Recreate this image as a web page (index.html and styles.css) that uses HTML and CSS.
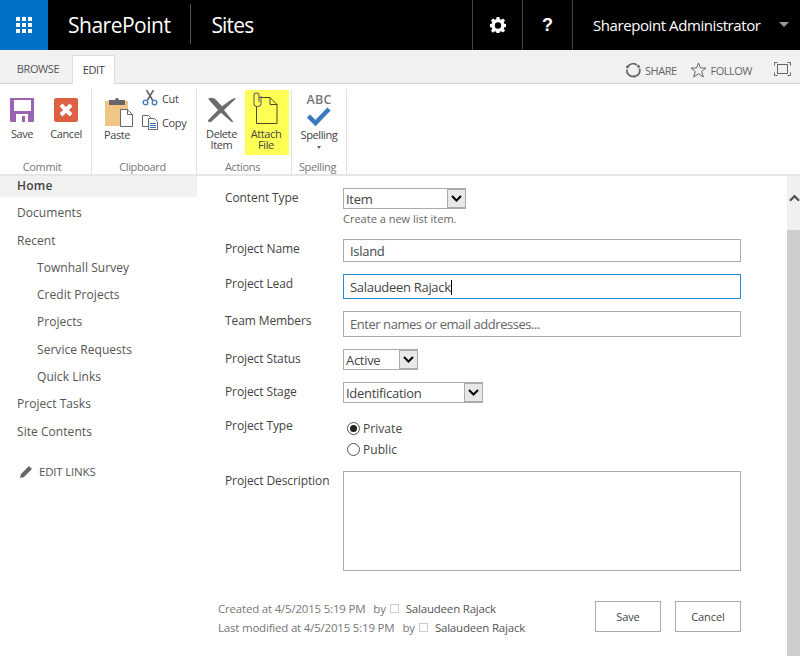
FILE: index.html
```html
<!DOCTYPE html>
<html lang="en">
<head>
<meta charset="utf-8">
<title>SharePoint Sites</title>
<link rel="stylesheet" href="styles.css">
</head>
<body>
<div class="page">
<header class="suite">
  <div class="waffle">
    <svg width="16" height="16" viewBox="0 0 16 16" fill="#fff"><rect x="0" y="0" width="4" height="4"/><rect x="6" y="0" width="4" height="4"/><rect x="12" y="0" width="4" height="4"/><rect x="0" y="6" width="4" height="4"/><rect x="6" y="6" width="4" height="4"/><rect x="12" y="6" width="4" height="4"/><rect x="0" y="12" width="4" height="4"/><rect x="6" y="12" width="4" height="4"/><rect x="12" y="12" width="4" height="4"/></svg>
  </div>
  <div class="brand">SharePoint</div>
  <div class="brand-sep"></div>
  <div class="brand sites">Sites</div>
  <div class="suite-spacer"></div>
  <div class="suite-btn">
    <svg width="16" height="16" viewBox="0 0 16 16"><path fill="#fff" fill-rule="evenodd" d="M6.6 0h2.8l.4 2.2 1.3.6L13 1.500l2 2-1.300 1.900.6 1.300 2.200.4v2.800l-2.200.4-.6 1.300 1.300 1.900-2 2-1.900-1.300-1.300.6-.4 2.200H6.600l-.4-2.200-1.300-.6L3 15.700l-2-2 1.300-1.900-.6-1.300L0 10V7.100l1.700-.4.600-1.300L1 3.500l2-2 1.900 1.300 1.300-.6zM8 5.300a3.200 3.200 0 1 0 0 6.400 3.200 3.200 0 0 0 0-6.400z"/></svg>
  </div>
  <div class="suite-btn"><span class="help">?</span></div>
  <div class="user">
    <span class="user-name">Sharepoint Administrator</span>
    <span class="user-caret"></span>
  </div>
</header>

<nav class="tabs">
  <div class="tab">BROWSE</div>
  <div class="tab tab-active">EDIT</div>
  <div class="tabs-spacer"></div>
  <div class="action">
    <svg width="16" height="16" viewBox="0 0 16 16" fill="none" stroke="#666" stroke-width="1.700"><path d="M3 4.500A6.200 6.200 0 0 1 12 3"/><path d="M14.500 6.500A6.500 6.500 0 0 1 11 14"/><path d="M8.500 14.700A6.500 6.500 0 0 1 1.800 7.500"/><circle cx="2.500" cy="5" r="1.400" fill="#666" stroke="none"/><circle cx="13.500" cy="4.500" r="1.400" fill="#666" stroke="none"/><circle cx="9.500" cy="14.300" r="1.400" fill="#666" stroke="none"/></svg>
    <span>SHARE</span>
  </div>
  <div class="action">
    <svg width="17" height="16" viewBox="0 0 17 16" fill="none" stroke="#666"><path d="M8.500 1l2 5h5.500l-4.300 3.500 1.600 5.500-4.800-3.200L3.700 15l1.600-5.500L1 6h5.500z"/></svg>
    <span>FOLLOW</span>
  </div>
  <div class="focus">
    <svg width="17" height="14" viewBox="0 0 17 14" fill="none" stroke="#666"><path d="M.5 3.500v-3H3.500M13.500 .5h3v3M16.500 10.500v3h-3M3.500 13.500h-3v-3"/><rect x="3.500" y="2.500" width="10" height="9"/></svg>
  </div>
</nav>

<section class="ribbon">
  <div class="group group-commit">
    <div class="group-body">
      <div class="big big-save">
        <svg class="big-icon" width="26" height="26" viewBox="0 0 26 26"><path fill="#9b64b3" d="M1 1h24v23a1 1 0 0 1-1 1H2a1 1 0 0 1-1-1z"/><rect x="5" y="3" width="17" height="11" fill="#fff"/><rect x="7" y="17" width="12" height="8" fill="#fff"/><rect x="13" y="19" width="3" height="6" fill="#9b64b3"/></svg>
        <span class="big-label">Save</span>
      </div>
      <div class="big big-cancel">
        <svg class="big-icon" width="26" height="26" viewBox="0 0 26 26"><rect x="1" y="1" width="24" height="24" rx="2" fill="#dd6043"/><path d="M8 8l10 10M18 8L8 18" stroke="#fff" stroke-width="4"/></svg>
        <span class="big-label">Cancel</span>
      </div>
    </div>
    <div class="group-title">Commit</div>
  </div>
  <div class="group group-clip">
    <div class="group-body">
      <div class="big big-paste">
        <svg class="big-icon paste-icon" width="30" height="30" viewBox="0 0 30 30"><path fill="#efc684" d="M1 4h23v25H1z"/><path fill="#666" d="M5 3h6a2 2 0 0 1 4 0h6v5H5z"/><path fill="#fff" stroke="#666" d="M16.500 12.500h7l5 5v12h-12z"/><path fill="none" stroke="#666" d="M23.500 12.500v5h5"/></svg>
        <span class="big-label">Paste</span>
      </div>
      <div class="small-col">
        <div class="small">
          <svg width="16" height="16" viewBox="0 0 16 16" fill="none"><path stroke="#666" stroke-width="1.600" d="M4.500 0l6 10M11.500 0l-6 10"/><circle cx="3.500" cy="12.500" r="2.300" stroke="#3b79bd" stroke-width="1.300"/><circle cx="12.500" cy="12.500" r="2.300" stroke="#3b79bd" stroke-width="1.300"/></svg>
          <span>Cut</span>
        </div>
        <div class="small">
          <svg width="16" height="16" viewBox="0 0 16 16" fill="#fff" stroke="#666"><path d="M.5 1.500h6l2 2v9h-8z"/><path d="M6.500 4.500h6l3 3v8h-9z"/><path stroke="#3b79bd" d="M8 9.500h6M8 11.500h6M8 13.500h6"/></svg>
          <span>Copy</span>
        </div>
      </div>
    </div>
    <div class="group-title">Clipboard</div>
  </div>
  <div class="group group-actions">
    <div class="group-body">
      <div class="big big-delete">
        <svg class="big-icon" width="30" height="26" viewBox="0 0 30 28" preserveAspectRatio="none"><path fill="#6b6b6b" d="M1 2c3-2 6-1 8 1l6 7 9-7c2-1.500 4-2 5-1.500L17 14l9 12c.5 1-1 1.500-2 .500L14 17 4 27c-2 .5-3.500-1-3-2l10-11z"/></svg>
        <span class="big-label">Delete<br>Item</span>
      </div>
      <div class="big big-attach">
        <svg class="big-icon attach-icon" width="26" height="32" viewBox="0 0 26 32" fill="none" stroke="#555"><path d="M3.500 5.500h13.500l7 7v19h-20.500z" stroke="#4a4a20"/><path d="M17 5.500v7h7" stroke="#4a4a20"/><path d="M6 10V3.500a2.500 2.500 0 0 0-5 0V11a3.500 3.500 0 0 0 7 0V4" stroke="#666" stroke-width="1.100" fill="#ffff55"/></svg>
        <span class="big-label">Attach<br>File</span>
      </div>
    </div>
    <div class="group-title">Actions</div>
  </div>
  <div class="group group-spell">
    <div class="group-body">
      <div class="big big-spell">
        <span class="abc">ABC</span>
        <svg class="check" width="24" height="20" viewBox="0 0 24 20"><path fill="none" stroke="#3b79bd" stroke-width="4.500" d="M1.500 9l7 7L22 2"/></svg>
        <span class="big-label">Spelling</span>
        <span class="spell-caret"></span>
      </div>
    </div>
    <div class="group-title">Spelling</div>
  </div>
</section>

<div class="content">
  <aside class="nav">
    <a class="nav-item nav-home">Home</a>
    <a class="nav-item">Documents</a>
    <a class="nav-item">Recent</a>
    <a class="nav-item nav-sub">Townhall Survey</a>
    <a class="nav-item nav-sub">Credit Projects</a>
    <a class="nav-item nav-sub">Projects</a>
    <a class="nav-item nav-sub">Service Requests</a>
    <a class="nav-item nav-sub">Quick Links</a>
    <a class="nav-item">Project Tasks</a>
    <a class="nav-item">Site Contents</a>
    <a class="edit-links">
      <svg width="14" height="14" viewBox="0 0 14 14"><path fill="#666" d="M10 1l3 3-8 8-4 1 1-4z"/></svg>
      <span>EDIT LINKS</span>
    </a>
  </aside>

  <main class="form">
    <div class="row row-type">
      <div class="label">Content Type</div>
      <div class="field">
        <div class="select select-type"><span>Item</span><span class="arrow"><svg width="11" height="7" viewBox="0 0 11 7"><path fill="none" stroke="#000" stroke-width="2" d="M1 1l4.500 4.500L10 1"/></svg></span></div>
        <div class="hint">Create a new list item.</div>
      </div>
    </div>
    <div class="row row-name">
      <div class="label">Project Name</div>
      <div class="field"><div class="input input-name">Island</div></div>
    </div>
    <div class="row row-lead">
      <div class="label">Project Lead</div>
      <div class="field"><div class="input input-lead">Salaudeen Rajack<span class="caret"></span></div></div>
    </div>
    <div class="row row-team">
      <div class="label">Team Members</div>
      <div class="field"><div class="input input-team">Enter names or email addresses...</div></div>
    </div>
    <div class="row row-status">
      <div class="label">Project Status</div>
      <div class="field"><div class="select select-status"><span>Active</span><span class="arrow"><svg width="11" height="7" viewBox="0 0 11 7"><path fill="none" stroke="#000" stroke-width="2" d="M1 1l4.500 4.500L10 1"/></svg></span></div></div>
    </div>
    <div class="row row-stage">
      <div class="label">Project Stage</div>
      <div class="field"><div class="select select-stage"><span>Identification</span><span class="arrow"><svg width="11" height="7" viewBox="0 0 11 7"><path fill="none" stroke="#000" stroke-width="2" d="M1 1l4.500 4.500L10 1"/></svg></span></div></div>
    </div>
    <div class="row row-project-type">
      <div class="label">Project Type</div>
      <div class="field radios">
        <div class="radio-line"><span class="radio radio-on"></span>Private</div>
        <div class="radio-line"><span class="radio"></span>Public</div>
      </div>
    </div>
    <div class="row row-desc">
      <div class="label">Project Description</div>
      <div class="field"><div class="textarea"></div></div>
    </div>
    <div class="foot">
      <div class="meta">
        <div class="meta-line">Created at 4/5/2015 5:19 PM<span class="by">by</span><span class="box"></span><span class="who">Salaudeen Rajack</span></div>
        <div class="meta-line">Last modified at 4/5/2015 5:19 PM<span class="by">by</span><span class="box"></span><span class="who">Salaudeen Rajack</span></div>
      </div>
      <div class="btn">Save</div>
      <div class="btn">Cancel</div>
    </div>
  </main>

  <div class="scroll">
    <div class="scroll-up"><svg width="12" height="8" viewBox="0 0 12 8"><path fill="none" stroke="#555" stroke-width="2.500" d="M1 7l5-5 5 5"/></svg></div>
    <div class="scroll-thumb"></div>
  </div>
</div>
</div>
</body>
</html>
```
FILE: styles.css
```css
* { box-sizing: border-box; }
html, body { margin: 0; padding: 0; }
body {
  width: 800px;
  height: 656px;
  overflow: hidden;
  background: #fff;
  font-family: "Open Sans", "Liberation Sans", sans-serif;
  font-size: 12px;
  letter-spacing: -0.1px;
  color: #444;
}
.page { display: flex; flex-direction: column; height: 656px; }

/* suite bar */
.suite { display: flex; align-items: stretch; height: 50px; background: #000; color: #fff; flex: none; }
.waffle { width: 48px; background: #0072c6; display: flex; align-items: center; justify-content: center; }
.brand { font-size: 21px; line-height: 50px; padding-left: 20px; letter-spacing: -0.5px; }
.brand-sep { width: 1px; background: #555; margin: 4px 0 6px 20px; }
.sites { padding-left: 20px; letter-spacing: -0.8px; }
.suite-spacer { flex: 1; }
.suite-btn { width: 50px; border-left: 1px solid #444; display: flex; align-items: center; justify-content: center; }
.help { font-size: 18px; font-weight: 700; letter-spacing: 0; font-family: "Liberation Sans", sans-serif; }
.user { width: 228px; border-left: 1px solid #444; display: flex; align-items: center; padding: 0 0 1px 20px; }
.user-name { font-size: 15px; letter-spacing: -0.42px; width: 186px; white-space: nowrap; }
.user-caret { width: 0; height: 0; border: 5px solid transparent; border-top: 5px solid #999; margin-top: 4px; }

/* tabs */
.tabs { display: flex; height: 34px; background: #f1f1f1; border-bottom: 1px solid #d8d8d8; flex: none; padding-top: 5px; }
.tab { width: 72px; padding-left: 4px; text-align: center; line-height: 28px; font-size: 11px; letter-spacing: -0.4px; color: #555; }
.tab-active { width: 43px; padding-left: 0; background: #fff; border: 1px solid #dcdcdc; border-bottom: 0; height: 29px; line-height: 27px; color: #444; }
.tabs-spacer { flex: 1; }
.action { display: flex; align-items: center; gap: 4px; height: 24px; margin-right: 13px; margin-top: 3px; font-size: 11px; letter-spacing: -0.5px; color: #666; }
.focus { width: 26px; height: 24px; margin: 2px 0 0 9px; display: flex; align-items: center; }

/* ribbon */
.ribbon { display: flex; height: 92px; border-bottom: 2px solid #e6e6e6; flex: none; background: #fff; padding-top: 5px; }
.group { display: flex; flex-direction: column; border-right: 1px solid #e2e2e2; }
.group-commit { width: 92px; }
.group-clip { width: 105px; }
.group-actions { width: 95px; }
.group-spell { width: 55px; }
.group-body { display: flex; height: 67px; }
.group-title { font-size: 11px; color: #777; text-align: center; line-height: 14px; margin-top: 4px; padding-right: 3px; letter-spacing: -0.35px; }
.group-commit .group-title { padding-right: 7px; }
.big { display: flex; flex-direction: column; align-items: center; color: #444; position: relative; }
.big-label { font-size: 11px; line-height: 11px; text-align: center; letter-spacing: -0.4px; }
.big-icon { flex: none; }
.big-save { width: 44px; padding-top: 8px; }
.big-cancel { width: 44px; padding-top: 8px; }
.big-save .big-icon, .big-cancel .big-icon { margin-bottom: 5px; }
.big-paste { width: 50px; padding-top: 8px; }
.paste-icon { margin-bottom: 2px; margin-left: 4px; }
.small-col { display: flex; flex-direction: column; gap: 8px; padding-top: 1px; }
.small { display: flex; align-items: center; gap: 4px; height: 16px; font-size: 11px; color: #444; letter-spacing: -0.35px; }
.big-delete { width: 47px; margin-left: 1px; padding-top: 8px; }
.big-delete .big-icon { margin-bottom: 5px; }
.big-attach { width: 44px; height: 65px; margin-top: 1px; background: #ffff55; padding: 2px 2px 0 0; }
.attach-icon { margin-bottom: 4px; margin-left: -1px; }
.big-spell { width: 54px; padding-top: 3px; }
.abc { font-size: 12.500px; font-weight: 600; line-height: 15px; color: #777; letter-spacing: 0.2px; }
.check { margin-bottom: 2px; }
.spell-caret { width: 0; height: 0; border: 2.500px solid transparent; border-top: 3px solid #666; margin-top: 6px; }

/* body */
.content { display: flex; flex: 1; min-height: 0; }
.nav { width: 197px; flex: none; display: flex; flex-direction: column; letter-spacing: 0.05px; }
.nav-item { display: block; height: 27.300px; line-height: 19px; padding-left: 17px; color: #555; }
.nav-home { height: 21px; background: #f1f1f1; font-weight: 600; margin-bottom: 6.300px; color: #444; letter-spacing: 0.2px; }
.nav-sub { padding-left: 37px; }
.edit-links { display: flex; align-items: center; gap: 6px; padding-left: 19px; margin-top: 13px; height: 20px; font-size: 11.500px; color: #555; letter-spacing: -0.2px; }

.form { flex: 1; padding: 12px 0 0 28px; min-width: 0; }
.row { display: flex; }
.label { width: 118px; flex: none; color: #444; line-height: 18px; padding-top: 1px; }
.field { width: 398px; color: #444; font-size: 13px; letter-spacing: -0.3px; }
.select { display: flex; justify-content: space-between; align-items: center; height: 21px; border: 1px solid #ababab; padding-left: 2px; line-height: 19px; background: #fff; }
.select span:first-child { padding-top: 1px; }
.arrow { width: 19px; height: 19px; background: #e8e8e8; border: 1px solid #777; display: flex; align-items: center; justify-content: center; margin-right: -1px; outline: 1px solid #aaa; outline-offset: -1px; }
.select-type { width: 123px; }
.select-status { width: 75px; }
.select-stage { width: 140px; }
.hint { font-size: 11px; color: #666; line-height: 14px; margin-top: 3px; letter-spacing: 0; }
.input { border: 1px solid #ababab; height: 23px; line-height: 23px; padding-left: 6px; }
.input-lead { height: 25px; line-height: 24px; border-color: #2a8dd4; }
.input-team { height: 26px; line-height: 25px; color: #666; letter-spacing: -0.45px; }
.caret { display: inline-block; width: 1px; height: 15px; background: #000; vertical-align: -3px; }
.textarea { height: 100px; border: 1px solid #ababab; }
.row-type { height: 51px; }
.row-name { height: 35px; }
.row-lead { height: 37px; }
.row-team { height: 38px; }
.row-status { height: 33px; }
.row-stage { height: 33px; }
.row-project-type { height: 56px; }
.row-desc { height: 130px; }
.row-project-type .label { padding-top: 2px; }
.radios { padding-top: 3px; font-size: 12px; letter-spacing: 0.05px; }
.radio-line { display: flex; align-items: center; height: 21px; gap: 3px; color: #444; padding-left: 4px; }
.radio { width: 13px; height: 13px; border: 1px solid #555; border-radius: 50%; display: flex; align-items: center; justify-content: center; background: #fff; }
.radio-on::after { content: ""; width: 7px; height: 7px; border-radius: 50%; background: #222; }

.foot { display: flex; align-items: flex-start; width: 523px; margin-left: -7px; }
.meta { flex: 1; font-size: 11.500px; color: #777; line-height: 19px; margin-top: -2px; letter-spacing: -0.2px; }
.meta-line { display: flex; align-items: center; white-space: pre; }
.by { margin-left: 8px; }
.box { width: 9px; height: 9px; border: 1px solid #ccc; margin: 0 7px 0 4px; }
.who { color: #555; }
.btn { width: 66px; height: 31px; line-height: 29px; margin-left: 14px; border: 1px solid #ababab; text-align: center; font-size: 11px; color: #444; flex: none; }

.scroll { width: 13px; flex: none; background: #f0f0f0; display: flex; flex-direction: column; }
.scroll-up { height: 54px; display: flex; align-items: flex-start; justify-content: center; padding: 18px 0 0 2px; }
.scroll-thumb { flex: 1; background: #cdcdcd; }
```
